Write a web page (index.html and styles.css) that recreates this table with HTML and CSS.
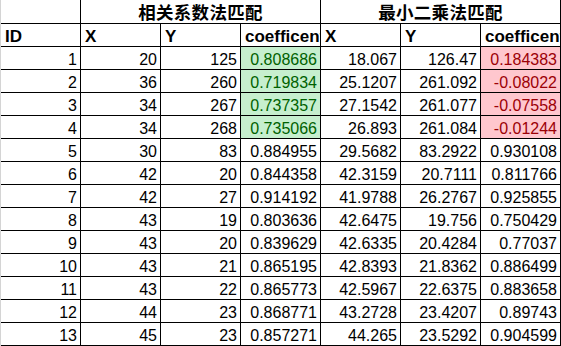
FILE: index.html
```html
<!DOCTYPE html>
<html>
<head>
<meta charset="utf-8">
<link rel="stylesheet" href="styles.css">
</head>
<body>
<div class="sheet">
  <div class="cell title"></div>
  <div class="cell title span3">相关系数法匹配</div>
  <div class="cell title span3">最小二乘法匹配</div>

  <div class="cell head">ID</div>
  <div class="cell head">X</div>
  <div class="cell head">Y</div>
  <div class="cell head">coefficent</div>
  <div class="cell head">X</div>
  <div class="cell head">Y</div>
  <div class="cell head">coefficent</div>

  <div class="cell num">1</div><div class="cell num">20</div><div class="cell num">125</div><div class="cell num good">0.808686</div><div class="cell num">18.067</div><div class="cell num">126.47</div><div class="cell num bad">0.184383</div>
  <div class="cell num">2</div><div class="cell num">36</div><div class="cell num">260</div><div class="cell num good">0.719834</div><div class="cell num">25.1207</div><div class="cell num">261.092</div><div class="cell num bad">-0.08022</div>
  <div class="cell num">3</div><div class="cell num">34</div><div class="cell num">267</div><div class="cell num good">0.737357</div><div class="cell num">27.1542</div><div class="cell num">261.077</div><div class="cell num bad">-0.07558</div>
  <div class="cell num">4</div><div class="cell num">34</div><div class="cell num">268</div><div class="cell num good">0.735066</div><div class="cell num">26.893</div><div class="cell num">261.084</div><div class="cell num bad">-0.01244</div>
  <div class="cell num">5</div><div class="cell num">30</div><div class="cell num">83</div><div class="cell num">0.884955</div><div class="cell num">29.5682</div><div class="cell num">83.2922</div><div class="cell num">0.930108</div>
  <div class="cell num">6</div><div class="cell num">42</div><div class="cell num">20</div><div class="cell num">0.844358</div><div class="cell num">42.3159</div><div class="cell num">20.7111</div><div class="cell num">0.811766</div>
  <div class="cell num">7</div><div class="cell num">42</div><div class="cell num">27</div><div class="cell num">0.914192</div><div class="cell num">41.9788</div><div class="cell num">26.2767</div><div class="cell num">0.925855</div>
  <div class="cell num">8</div><div class="cell num">43</div><div class="cell num">19</div><div class="cell num">0.803636</div><div class="cell num">42.6475</div><div class="cell num">19.756</div><div class="cell num">0.750429</div>
  <div class="cell num">9</div><div class="cell num">43</div><div class="cell num">20</div><div class="cell num">0.839629</div><div class="cell num">42.6335</div><div class="cell num">20.4284</div><div class="cell num">0.77037</div>
  <div class="cell num">10</div><div class="cell num">43</div><div class="cell num">21</div><div class="cell num">0.865195</div><div class="cell num">42.8393</div><div class="cell num">21.8362</div><div class="cell num">0.886499</div>
  <div class="cell num">11</div><div class="cell num">43</div><div class="cell num">22</div><div class="cell num">0.865773</div><div class="cell num">42.5967</div><div class="cell num">22.6375</div><div class="cell num">0.883658</div>
  <div class="cell num">12</div><div class="cell num">44</div><div class="cell num">23</div><div class="cell num">0.868771</div><div class="cell num">43.2728</div><div class="cell num">23.4207</div><div class="cell num">0.89743</div>
  <div class="cell num">13</div><div class="cell num">45</div><div class="cell num">23</div><div class="cell num">0.857271</div><div class="cell num">44.265</div><div class="cell num">23.5292</div><div class="cell num">0.904599</div>
</div>
</body>
</html>
```

FILE: styles.css
```css
html, body {
  margin: 0;
  padding: 0;
  background: #ffffff;
  overflow: hidden;
}

.sheet {
  display: grid;
  grid-template-columns: repeat(7, 80px);
  grid-auto-rows: 23px;
  grid-template-rows: 24px;
  border-left: 1px solid #d4d4d4;
  width: 560px;
  font-family: "Liberation Sans", Arial, sans-serif;
  font-size: 16px;
  color: #000;
}

.cell {
  box-sizing: border-box;
  border-right: 1px solid #000;
  border-bottom: 1px solid #000;
  overflow: hidden;
  white-space: nowrap;
  padding: 0 3px;
  line-height: 25px;
}

.span3 {
  grid-column: span 3;
}

.title {
  text-align: center;
  font-family: "Noto Sans CJK SC", "Noto Sans", sans-serif;
  font-weight: 700;
  font-size: 17.5px;
  line-height: 24px;
  letter-spacing: 0.3px;
}

.head {
  font-weight: 700;
  font-size: 17px;
  line-height: 26px;
  padding-left: 4px;
}

.num {
  text-align: right;
  line-height: 25px;
}

.good {
  background: #c6efce;
  color: #006100;
}

.bad {
  background: #ffc7ce;
  color: #9c0006;
}
```
